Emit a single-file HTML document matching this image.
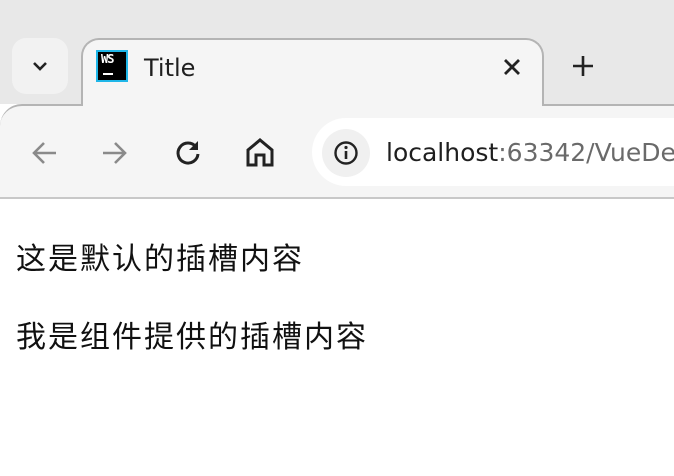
<!DOCTYPE html>
<html><head><meta charset="utf-8"><style>
*{margin:0;padding:0;box-sizing:border-box}
body{width:674px;height:476px;overflow:hidden;background:#fff;font-family:"Liberation Sans","Noto Sans CJK SC",sans-serif;position:relative}
.top{position:absolute;left:0;top:0;width:674px;height:104px;background:#e8e8e8}
.dd{position:absolute;left:12px;top:38px;width:56px;height:56px;border-radius:14px;background:#f2f2f2}
.tab{position:absolute;left:81px;top:38px;width:463px;height:68px;background:#f5f5f5;border:2px solid #b4b4b4;border-bottom:none;border-radius:18px 18px 0 0}
.toolbar{position:absolute;left:0;top:104px;width:674px;height:95px;background:#f5f5f5;border-top:2px solid #b4b4b4;border-radius:22px 0 0 0;border-bottom:2px solid #c8c8c8}
.tabcover{position:absolute;left:83px;top:100px;width:459px;height:10px;background:#f5f5f5}
.url{position:absolute;left:312px;top:118px;width:362px;height:68px;border-radius:34px 0 0 34px;background:#fff;overflow:hidden}
.info{position:absolute;left:322px;top:129px;width:48px;height:48px;border-radius:24px;background:#f0f0f0}
.urltext{position:absolute;left:386px;top:138px;width:288px;overflow:hidden;font-family:"DejaVu Sans","Liberation Sans",sans-serif;font-size:25px;color:#1f1f1f;white-space:nowrap}
.urltext span{color:#6a6a6a}
.title{position:absolute;left:144px;top:54px;font-family:"DejaVu Sans",sans-serif;font-size:24px;color:#1f1f1f}
.ws{position:absolute;left:96px;top:50px;width:32px;height:32px;background:#000;border:2px solid #1fb6e8;color:#fff;font:bold 12px "DejaVu Sans Mono",monospace;padding-left:3px;line-height:14px;letter-spacing:-1px}
.ws i{position:absolute;left:5px;top:21px;width:10px;height:2px;background:#fff}
p{position:absolute;left:16px;font-size:30px;color:#111;font-family:"Noto Sans CJK SC",sans-serif;letter-spacing:2px;white-space:nowrap}
svg{position:absolute}
</style></head><body>
<div class="top"></div>
<div class="dd"></div>
<svg style="left:30px;top:56px" width="20" height="20" viewBox="0 0 20 20"><path d="M4 7l6 6 6-6" fill="none" stroke="#222" stroke-width="2.6"/></svg>
<div class="toolbar"></div>
<div class="tab"></div>
<div class="tabcover"></div>
<div class="ws">WS<i></i></div>
<div class="title">Title</div>
<svg style="left:501px;top:56px" width="22" height="22" viewBox="0 0 22 22"><path d="M4 4l14 14M18 4L4 18" stroke="#222" stroke-width="2.8"/></svg>
<svg style="left:571px;top:54px" width="24" height="24" viewBox="0 0 24 24"><path d="M12 2v20M2 12h20" stroke="#222" stroke-width="2.6"/></svg>
<svg style="left:30px;top:139px" width="28" height="28" viewBox="0 0 28 28"><path d="M26 14H4M14 4L4 14l10 10" fill="none" stroke="#8a8a8a" stroke-width="2.6"/></svg>
<svg style="left:101px;top:139px" width="28" height="28" viewBox="0 0 28 28"><path d="M2 14h22M14 4l10 10-10 10" fill="none" stroke="#8a8a8a" stroke-width="2.6"/></svg>
<svg style="left:174px;top:138px" width="28" height="28" viewBox="0 0 28 28"><path d="M22 9A10 10 0 1 0 24 16" fill="none" stroke="#222" stroke-width="3"/><path d="M24 3v9h-9z" fill="#222"/></svg>
<svg style="left:245px;top:137px" width="30" height="30" viewBox="0 0 30 30"><path d="M3 28V13L15 3l12 10v15h-8v-10h-8v10z" fill="none" stroke="#222" stroke-width="3" stroke-linejoin="miter"/></svg>
<div class="url"></div>
<div class="info"></div>
<svg style="left:333px;top:140px" width="26" height="26" viewBox="0 0 26 26"><circle cx="13" cy="13" r="10.5" fill="none" stroke="#222" stroke-width="2.4"/><path d="M13 11v8" stroke="#222" stroke-width="2.6"/><circle cx="13" cy="7.5" r="1.6" fill="#222"/></svg>
<div class="urltext">localhost<span>:63342/VueDemo</span></div>
<p style="top:234px">这是默认的插槽内容</p>
<p style="top:312px">我是组件提供的插槽内容</p>
</body></html>
